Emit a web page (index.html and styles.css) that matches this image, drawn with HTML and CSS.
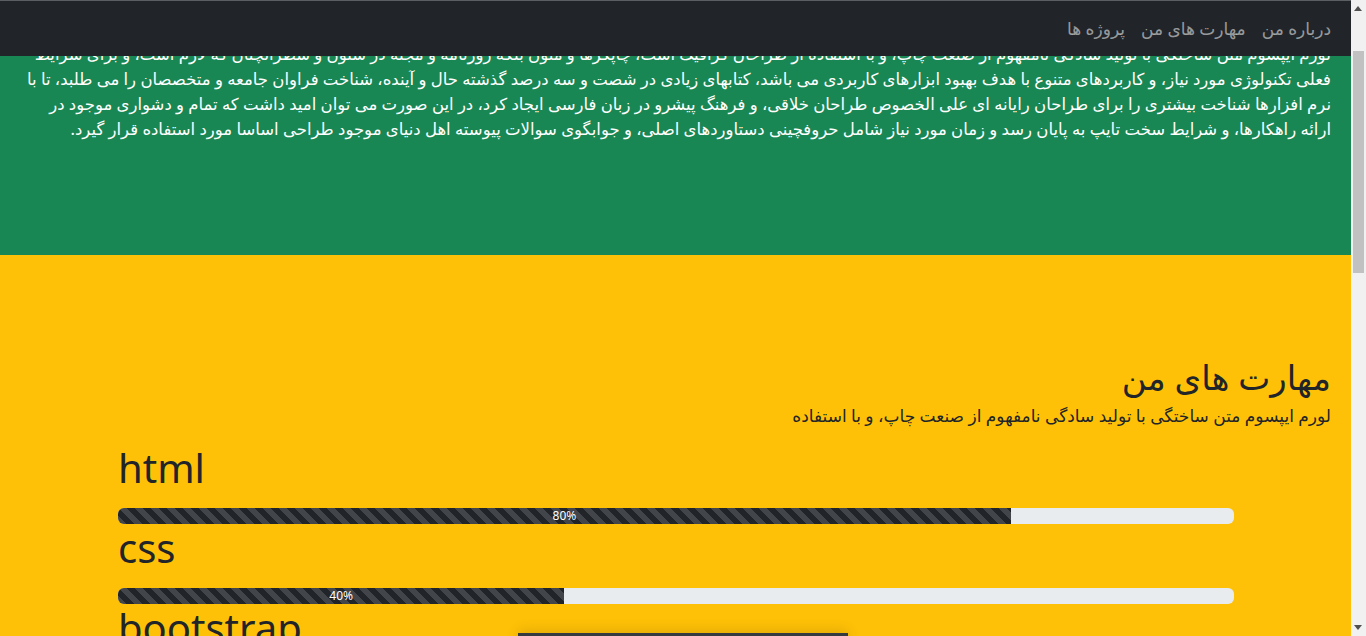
FILE: index.html
```html
<!DOCTYPE html>
<html lang="fa" dir="rtl">
<head>
<meta charset="utf-8">
<title>رزومه</title>
<link rel="stylesheet" href="styles.css">
</head>
<body>
<nav class="navbar">
  <ul class="nav">
    <li><a class="nav-link" href="#about">درباره من</a></li>
    <li><a class="nav-link" href="#skills">مهارت های من</a></li>
    <li><a class="nav-link" href="#projects">پروژه ها</a></li>
  </ul>
</nav>

<section class="about" id="about">
  <h2 class="section-title">درباره من</h2>
  <p class="about-text">لورم ایپسوم متن ساختگی با تولید سادگی نامفهوم از صنعت چاپ، و با استفاده از طراحان گرافیک است، چاپگرها و متون بلکه روزنامه و مجله در ستون و سطرآنچنان که لازم است، و برای شرایط فعلی تکنولوژی مورد نیاز، و کاربردهای متنوع با هدف بهبود ابزارهای کاربردی می باشد، کتابهای زیادی در شصت و سه درصد گذشته حال و آینده، شناخت فراوان جامعه و متخصصان را می طلبد، تا با نرم افزارها شناخت بیشتری را برای طراحان رایانه ای علی الخصوص طراحان خلاقی، و فرهنگ پیشرو در زبان فارسی ایجاد کرد، در این صورت می توان امید داشت که تمام و دشواری موجود در ارائه راهکارها، و شرایط سخت تایپ به پایان رسد و زمان مورد نیاز شامل حروفچینی دستاوردهای اصلی، و جوابگوی سوالات پیوسته اهل دنیای موجود طراحی اساسا مورد استفاده قرار گیرد.</p>
</section>

<section class="skills" id="skills">
  <h2 class="section-title">مهارت های من</h2>
  <p class="lead-text">لورم ایپسوم متن ساختگی با تولید سادگی نامفهوم از صنعت چاپ، و با استفاده</p>
  <div class="skill-list" dir="ltr">
    <div class="skill">
      <h1 class="skill-name">html</h1>
      <div class="progress"><div class="progress-bar" style="width:80%">80%</div></div>
    </div>
    <div class="skill">
      <h1 class="skill-name">css</h1>
      <div class="progress"><div class="progress-bar" style="width:40%">40%</div></div>
    </div>
    <div class="skill">
      <h1 class="skill-name">bootstrap</h1>
      <div class="progress"><div class="progress-bar" style="width:60%">60%</div></div>
    </div>
    <div class="skill">
      <h1 class="skill-name">javascript</h1>
      <div class="progress"><div class="progress-bar" style="width:50%">50%</div></div>
    </div>
  </div>
</section>

<section class="projects" id="projects">
  <h2 class="section-title">پروژه ها</h2>
  <p class="lead-text">لورم ایپسوم متن ساختگی با تولید سادگی نامفهوم از صنعت چاپ</p>
</section>

<div class="floating-card"></div>

<div class="scrollbar" aria-hidden="true">
  <span class="scroll-arrow up"></span>
  <span class="scroll-thumb"></span>
  <span class="scroll-arrow down"></span>
</div>

<script src="script.js"></script>
</body>
</html>
```

FILE: styles.css
```css
* { box-sizing: border-box; }

html, body {
  margin: 0;
  padding: 0;
}

body {
  font-family: "Noto Sans", "DejaVu Sans", sans-serif;
  font-size: 17px;
  line-height: 25px;
  color: #212529;
  background: #fff;
  margin-right: 15px;
}

.navbar {
  position: fixed;
  top: 0;
  left: 0;
  right: 15px;
  height: 56px;
  background: #212529;
  border-top: 1px solid #5c5f62;
  padding: 8px 12px 8px;
  display: flex;
  align-items: center;
  z-index: 10;
}

.nav {
  list-style: none;
  margin: 0;
  padding: 0;
  display: flex;
}

.nav-link {
  display: block;
  padding: 8px;
  color: rgba(255, 255, 255, 0.55);
  text-decoration: none;
  font-size: 17px;
  line-height: 24px;
}

.section-title {
  margin: 0 0 8px;
  font-size: 34px;
  font-weight: 500;
  line-height: 38px;
}

.about {
  background: #198754;
  color: #fff;
  padding: 92px 20px 0;
  min-height: 352px;
}

.about-text {
  margin: 0;
  font-size: 16.5px;
}

.skills {
  background: #ffc107;
  padding: 103px 20px 100px;
}

.lead-text {
  margin: 0 0 16px;
  line-height: 24px;
}

.skill-list {
  padding: 0 97px 0 98px;
}

.skill-name {
  margin: 0 0 16px;
  font-family: "Noto Sans", sans-serif;
  font-size: 40px;
  font-weight: 400;
  line-height: 48px;
  text-align: left;
}

.progress {
  height: 16px;
  background: #e9ecef;
  border-radius: 6px;
  overflow: hidden;
  display: flex;
}

.progress-bar {
  background-color: #212529;
  background-image: linear-gradient(45deg, rgba(255,255,255,.15) 25%, transparent 25%, transparent 50%, rgba(255,255,255,.15) 50%, rgba(255,255,255,.15) 75%, transparent 75%, transparent);
  background-size: 16px 16px;
  color: #fff;
  font-family: "Noto Sans", sans-serif;
  font-size: 12px;
  line-height: 16px;
  text-align: center;
  white-space: nowrap;
}

.projects {
  background: #f8f9fa;
  padding: 100px 20px;
  min-height: 764px;
}

.floating-card {
  position: fixed;
  left: 518px;
  top: 633px;
  width: 330px;
  height: 120px;
  background: #343a40;
  box-shadow: 0 -3px 12px rgba(0, 0, 0, 0.12);
  z-index: 5;
}

.scrollbar {
  position: fixed;
  top: 0;
  right: 0;
  width: 15px;
  height: 100%;
  background: #f1f1f1;
  z-index: 20;
}

.scroll-arrow {
  position: absolute;
  left: 3px;
  width: 0;
  height: 0;
  border-left: 4.5px solid transparent;
  border-right: 4.5px solid transparent;
}

.scroll-arrow.up {
  top: 6px;
  border-bottom: 5px solid #505050;
}

.scroll-arrow.down {
  bottom: 6px;
  border-top: 5px solid #505050;
}

.scroll-thumb {
  position: absolute;
  left: 2px;
  width: 11px;
  top: 51px;
  height: 222px;
  background: #c1c1c1;
}
```

FILE: script.js
```js
window.scrollTo(0, 97);
window.addEventListener('load', function () { window.scrollTo(0, 97); });
```
